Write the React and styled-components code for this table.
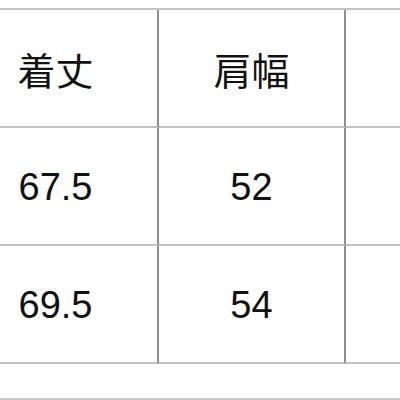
import React from "react";
import styled, { createGlobalStyle } from "styled-components";

const Global = createGlobalStyle`
  html, body { margin: 0; padding: 0; background: #ffffff; }
  body { font-family: "Liberation Sans", "Noto Sans CJK JP", sans-serif; }
  *, *::before, *::after { box-sizing: border-box; }
`;

const Page = styled.div`
  width: 400px;
  height: 400px;
  overflow: hidden;
  padding-top: 8px;
  display: flex;
  flex-direction: column;
`;

const Table = styled.div`
  display: grid;
  grid-template-columns: 159px 187px 1fr;
  border-top: 2px solid #c2c2c2;
`;

const Cell = styled.div`
  height: 118px;
  border-bottom: 2px solid #c2c2c2;
  border-right: ${(p) => (p.$last ? "none" : "2px solid #8e8e8e")};
  display: flex;
  align-items: center;
  justify-content: center;
  padding-right: ${(p) => (p.$first ? "46px" : "0")};
  padding-top: ${(p) => (p.$head ? "0" : "2px")};
  font-size: 38px;
  color: #111111;
  font-family: "Liberation Sans", "Noto Sans CJK JP", sans-serif;
`;

const Footer = styled.div`
  margin-top: 34px;
  border-top: 2px solid #c6c6c6;
  height: 20px;
`;

const rows = [
  ["着丈", "肩幅", ""],
  ["67.5", "52", ""],
  ["69.5", "54", ""],
];

export default function App() {
  return (
    <>
      <Global />
      <Page>
        <Table>
          {rows.map((r, i) =>
            r.map((c, j) => (
              <Cell
                key={`${i}-${j}`}
                $first={j === 0}
                $last={j === 2}
                $head={i === 0}
              >
                {c}
              </Cell>
            ))
          )}
        </Table>
        <Footer />
      </Page>
    </>
  );
}
